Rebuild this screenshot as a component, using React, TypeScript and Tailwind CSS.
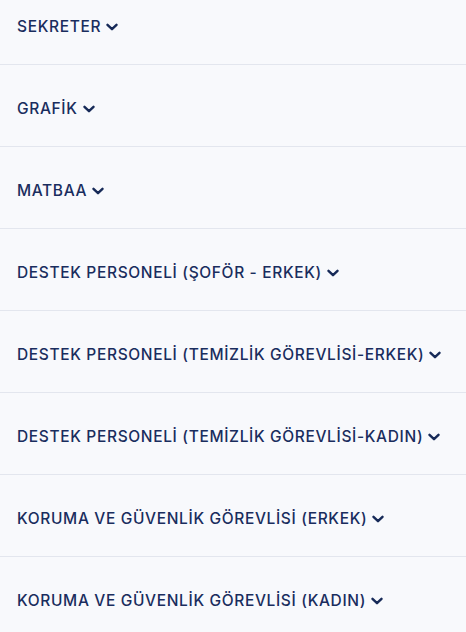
import React from "react";

const items = [
  "SEKRETER",
  "GRAFİK",
  "MATBAA",
  "DESTEK PERSONELİ (ŞOFÖR - ERKEK)",
  "DESTEK PERSONELİ (TEMİZLİK GÖREVLİSİ-ERKEK)",
  "DESTEK PERSONELİ (TEMİZLİK GÖREVLİSİ-KADIN)",
  "KORUMA VE GÜVENLİK GÖREVLİSİ (ERKEK)",
  "KORUMA VE GÜVENLİK GÖREVLİSİ (KADIN)",
];

function Chevron() {
  return (
    <svg width="12" height="12" viewBox="0 0 12 12" className="ml-[5px] shrink-0">
      <path d="M1.5 3.8 L6 8.2 L10.5 3.8" fill="none" stroke="#172a58" strokeWidth="2.4" strokeLinecap="round" strokeLinejoin="round" />
    </svg>
  );
}

export default function App() {
  return (
    <div className="w-[466px] h-[632px] overflow-hidden bg-[#f8f9fc]">
      <div className="-mt-[17px]">
        {items.map((t) => (
          <div key={t} className="h-[82px] border-b border-[#e3e6ee] flex items-center pl-[17px] pt-[7px]">
            <span className="text-[15.5px] text-[#1a2d5e] font-medium tracking-[0.65px]" style={{ fontFamily: "Inter, sans-serif" }}>
              {t}
            </span>
            <Chevron />
          </div>
        ))}
      </div>
    </div>
  );
}
